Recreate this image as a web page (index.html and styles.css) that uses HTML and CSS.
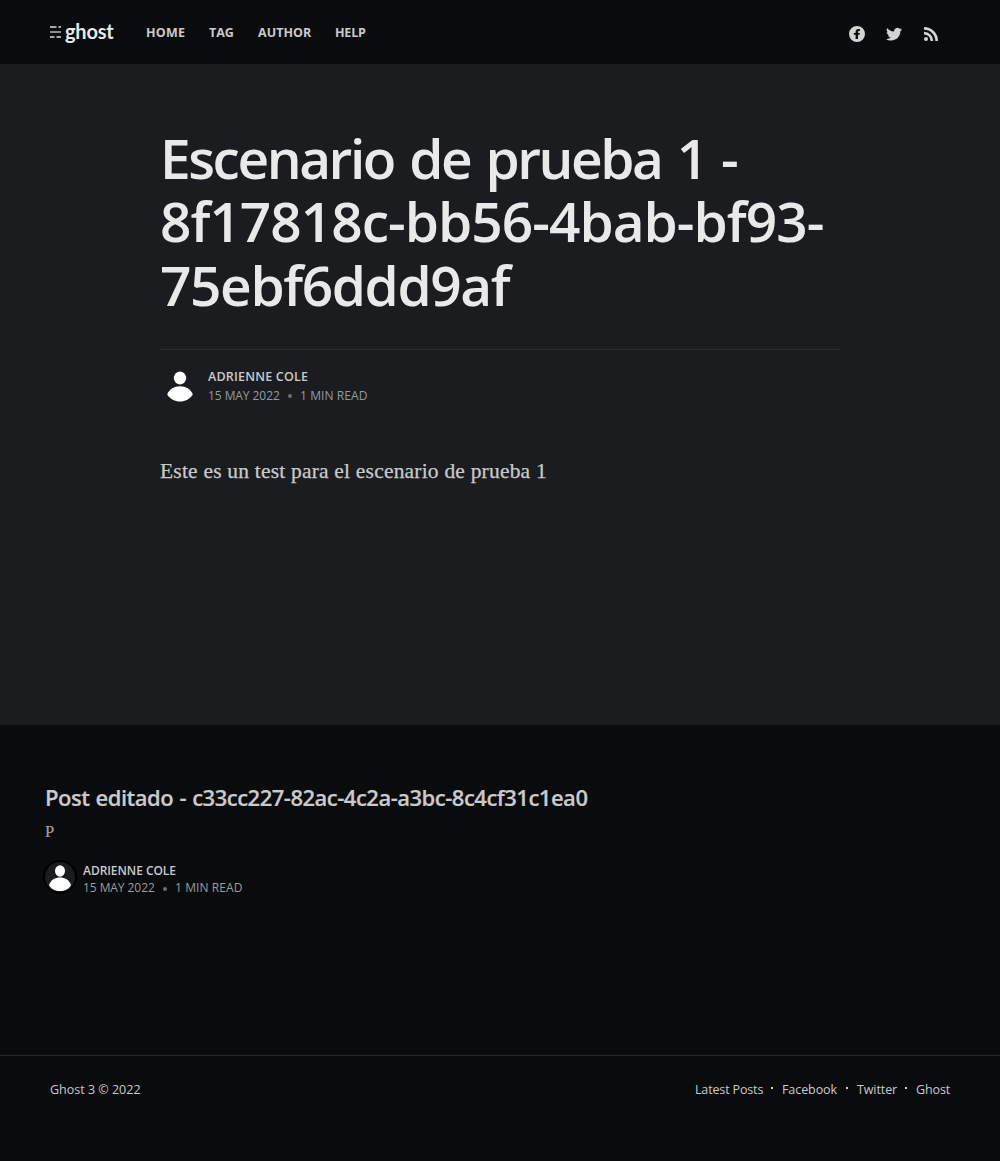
FILE: index.html
```html
<!DOCTYPE html>
<html lang="es">
<head>
<meta charset="utf-8">
<title>Escenario de prueba 1</title>
<link rel="stylesheet" href="styles.css">
</head>
<body>
<header class="site-header">
  <a class="logo">
    <svg class="logo-mark" width="11" height="12" viewBox="0 0 11 12"><path fill="#a5a6a7" d="M0 0h6.500v2H0zM8.500 0H11v2H8.500zM0 10h4.500v2H0zM6.500 10H11v2H6.500z"/><path fill="#8a8b8c" d="M0 5h11v2H0z"/></svg>
    <span class="logo-text">ghost</span>
  </a>
  <nav class="nav"><a class="nav-home">Home</a><a class="nav-tag">Tag</a><a class="nav-author">Author</a><a class="nav-help">Help</a></nav>
  <div class="social">
    <svg width="16" height="16" viewBox="0 0 32 32"><path d="M16 0a16 16 0 1 0 0 32A16 16 0 0 0 16 0zm5.700 10.200h-2.300c-.7 0-1.300.7-1.300 1.400v2.200h3.600l-.5 3.800h-3.100V26h-4.900v-8.400H9.600v-3.800h3.600v-2.400c0-3.300 2.400-5.600 5.300-5.600h3.200z"/></svg>
    <svg width="16" height="16" viewBox="0 0 32 32"><path d="M30.100 9.400c.6-.4 1.700-1.500 1.900-2.600-1 .5-2.300.8-3 .8.900-.7 1.900-2 2.200-3.300-1.300.8-2.700 1.200-4 1.400A6.500 6.500 0 0 0 16.200 11.200C9 11 4.700 7.300 2.200 4.200c-2 3.300-.8 6.700 2 8.700-1 0-2-.3-2.900-.8 0 3.300 2.200 5.700 5.200 6.500-1 .2-1.900.2-2.900.1.900 2.500 3.100 4.400 6.100 4.500A13.500 13.500 0 0 1 0 25.900C3 27.900 6.500 29 10.100 29c12.100 0 18.800-9.900 18.700-18.900z"/></svg>
    <svg width="14" height="14" viewBox="0 0 28 28"><circle cx="4" cy="24" r="4"/><path d="M0 9.500v5.400A13.100 13.100 0 0 1 13.100 28h5.500A18.600 18.600 0 0 0 0 9.500z"/><path d="M0 0v5.400A22.600 22.600 0 0 1 22.600 28H28A28 28 0 0 0 0 0z"/></svg>
  </div>
</header>
<main class="article">
  <div class="column">
    <h1 class="title"><span class="line line-a">Escenario de prueba 1 -</span><span class="line line-b">8f17818c-bb56-4bab-bf93-</span><span class="line line-c">75ebf6ddd9af</span></h1>
    <div class="byline">
      <svg class="avatar" width="40" height="40" viewBox="0 0 40 40"><ellipse cx="20" cy="12" rx="6.200" ry="6.500"/><path d="M7.200 28.500c2-5.500 7-8.300 12.800-8.300s10.800 2.800 12.800 8.300c-3 4.800-7.500 7-12.800 7S10.200 33.300 7.200 28.500z"/></svg>
      <div class="meta"><div class="author"><span class="fit-author">Adrienne Cole</span></div><div class="details"><span class="fit-date">15 May 2022</span><i class="bullet"></i><span class="fit-read">1 min read</span></div></div>
    </div>
    <p class="content"><span class="fit-content">Este es un test para el escenario de prueba 1</span></p>
  </div>
</main>
<section class="next">
  <h2 class="card-title"><span class="fit-card">Post editado - c33cc227-82ac-4c2a-a3bc-8c4cf31c1ea0</span></h2>
  <p class="excerpt">P</p>
  <div class="card-byline">
    <svg class="card-avatar" width="34" height="34" viewBox="0 0 34 34"><defs><clipPath id="face"><circle cx="17" cy="17" r="15"/></clipPath></defs><circle cx="17" cy="17" r="17" fill="#000"/><circle cx="17" cy="17" r="15" fill="#1b1c20"/><g clip-path="url(#face)"><ellipse cx="17" cy="11" rx="5" ry="5.700"/><path d="M6 25c2-5.200 6-7.500 11-7.500s9 2.300 11 7.500c-2 4-6 6-11 6S8 29 6 25z"/></g></svg>
    <div class="card-meta"><div class="card-author"><span class="fit-card-author">Adrienne Cole</span></div><div class="details card-details"><span class="fit-date">15 May 2022</span><i class="bullet"></i><span class="fit-read">1 min read</span></div></div>
  </div>
</section>
<footer class="footer">
  <span class="fit-copy">Ghost 3 © 2022</span>
  <nav class="links"><a class="fit-latest">Latest Posts</a><i class="dot"></i><a class="fit-facebook">Facebook</a><i class="dot"></i><a class="fit-twitter">Twitter</a><i class="dot"></i><a class="fit-ghost">Ghost</a></nav>
</footer>
</body>
</html>
```
FILE: styles.css
```css
* { box-sizing: border-box; }
body { margin: 0; min-height: 1161px; background: #0a0b0d; color: #c9cacb; font-family: "Open Sans", "Noto Sans", sans-serif; }
svg { display: block; fill: #fff; flex: none; }
.site-header { height: 64px; padding: 0 62px 0 50px; display: flex; align-items: center; }
.logo { display: flex; align-items: center; width: 96px; gap: 4px; }
.logo-text { font: 700 20px/24px Lato, sans-serif; color: #e9e9e9; letter-spacing: -.2px; margin-top: -2px; }
.nav { display: flex; gap: 24px; text-transform: uppercase; font-size: 12.500px; font-weight: 700; line-height: 20px; white-space: nowrap; padding-top: 2px; }
.nav-home { width: 39px; letter-spacing: .2px; }
.nav-tag { width: 25px; }
.nav-author { width: 54px; letter-spacing: .05px; }
.nav-help { letter-spacing: -.2px; margin-left: -1px; }
.social { margin-left: auto; display: flex; align-items: center; gap: 21px; padding-top: 4px; }
.social svg { fill: #d3d3d3; }
.social svg:last-child { margin-left: 1px; }
.article { height: 661px; background: #1b1c20; padding: 62px 160px 0; }
.title { margin: 0; font-size: 55px; line-height: 63.250px; font-weight: 600; color: #e9e9e9; white-space: nowrap; }
.line { display: block; width: max-content; }
.line-a { letter-spacing: -2.450px; word-spacing: 3.400px; }
.line-b { letter-spacing: -.98px; }
.line-c { letter-spacing: -1.400px; }
.byline { margin-top: 33px; border-top: 1px solid #2b2c30; padding-top: 16px; display: flex; }
.avatar { margin-right: 8px; }
.meta { padding-top: 1px; }
.author { font-size: 12.500px; line-height: 19px; font-weight: 600; text-transform: uppercase; letter-spacing: .2px; }
.details { display: flex; align-items: center; font-size: 12px; line-height: 19px; text-transform: uppercase; color: #929ba0; white-space: nowrap; }
.fit-date { width: 72px; letter-spacing: -.07px; }
.fit-read { letter-spacing: .08px; }
.bullet { width: 4px; height: 4px; border-radius: 50%; background: #687077; margin: 2px 8px 0; }
.content { margin: 49px 0 0; font: 21.500px/32px "Liberation Serif", serif; letter-spacing: .2px; white-space: nowrap; -webkit-text-stroke: .25px; }
.next { height: 330px; padding: 57px 45px 0; }
.card-title { margin: 0; font-size: 22px; line-height: 30px; font-weight: 600; letter-spacing: -.5px; word-spacing: 1px; white-space: nowrap; -webkit-text-stroke: .2px; }
.excerpt { margin: 7px 0 0; font: 16.500px/26px "Liberation Serif", serif; color: #a0a1a2; -webkit-text-stroke: .2px; }
.card-byline { display: flex; margin: 15px 0 0 -2px; }
.card-meta { margin-left: 6px; padding-top: 2px; }
.card-author { font-size: 12px; line-height: 17px; font-weight: 600; text-transform: uppercase; letter-spacing: -.05px; }
.card-details { line-height: 17px; color: #999b9d; }
.footer { border-top: 1px solid #26272a; height: 106px; padding: 23px 50px 0; display: flex; justify-content: space-between; font-size: 12.500px; line-height: 21px; white-space: nowrap; }
.links { display: flex; }
.dot { width: 2px; height: 2px; background: #d0d0d0; margin: 8px 9px 0; }
.fit-latest { width: 67px; letter-spacing: -.15px; }
.fit-facebook { width: 55px; letter-spacing: -.08px; }
.fit-twitter { width: 39px; letter-spacing: -.1px; }
.fit-ghost { width: 34px; letter-spacing: -.1px; }
```
